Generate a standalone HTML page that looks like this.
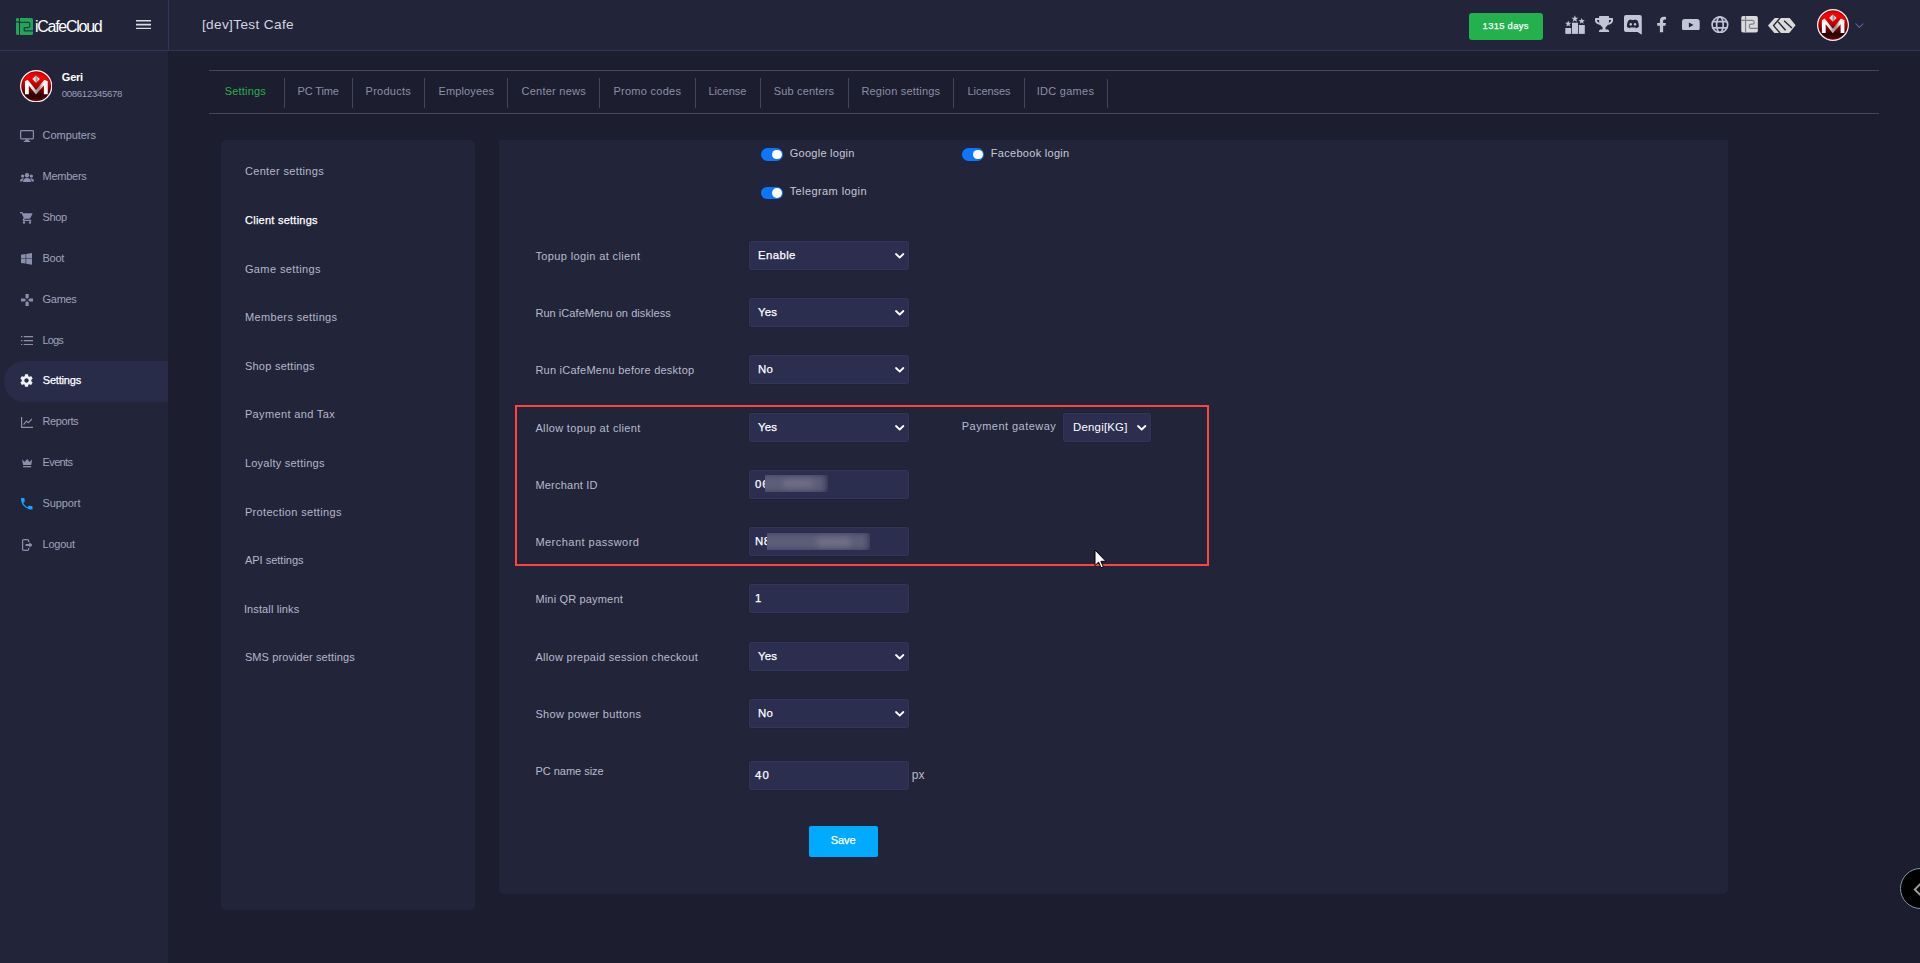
<!DOCTYPE html>
<html lang="en">
<head>
<meta charset="utf-8">
<title>iCafeCloud - Client settings</title>
<style>
*{box-sizing:border-box;margin:0;padding:0}
html,body{width:1920px;height:963px;overflow:hidden}
body{position:relative;background:#1c1d2e;font-family:"Liberation Sans",sans-serif;font-size:11px;color:#b8bacd}
.tx{position:absolute;white-space:nowrap;display:block;text-decoration:none;font-family:inherit;background:none;border:0;padding:0;margin:0}
.abs{position:absolute}
ul{list-style:none}
.topbar{position:absolute;left:0;top:0;width:1920px;height:51px;background:#222539;border-bottom:1px solid #30335a}
.brand{position:absolute;left:0;top:0;width:169px;height:50px;border-right:1px solid #30335a}
.sidebar{position:absolute;left:0;top:51px;width:168px;height:912px;background:#222539}
.nav-active{position:absolute;left:4px;top:360.5px;width:164px;height:41.5px;background:#282c48;border-radius:21px 0 0 21px}
.tabs{position:absolute;left:209px;top:70px;width:1670px;height:44px;border-top:1px solid #444759;border-bottom:1px solid #444759}
.tabs i{position:absolute;top:7px;width:1px;height:30px;background:#444759}
.tabs i.last{width:3px;background:none;border-right:1px solid #444759;border-top:1px solid transparent;border-radius:0 3px 0 0}
.panel{position:absolute;background:#222539}
.left-panel{left:221px;top:140px;width:254px;height:770px;border-radius:5px}
.right-panel{left:499px;top:140px;width:1229px;height:754px;border-radius:0 0 5px 5px}
.ctl{position:absolute;left:748px;width:162px;height:31px;background:#2c2e50;border:1px solid #202136;border-radius:3px;box-shadow:inset 0 0 0 1px #323558}
.ctl svg{position:absolute;right:4.3px;top:11.7px}
.sw{position:absolute;width:22px;height:12.6px;border-radius:7px;background:#0d76ff}
.sw b{position:absolute;right:1.2px;top:1.4px;width:9.8px;height:9.8px;border-radius:50%;background:#fff}
.hl{position:absolute;left:515px;top:405px;width:694px;height:161px;border:2px solid #ff4343}
.blur{position:absolute;overflow:hidden;background:#2c2e50}
.blur u{position:absolute;display:block;filter:blur(3px);background:#5c5d77;border-radius:3px}
.btn-save{position:absolute;left:809px;top:826px;width:69px;height:31px;border-radius:2px;background:#00aaff}
.badge{position:absolute;left:1469px;top:13px;width:74px;height:27px;border-radius:3px;background:#22b14c}

</style>
</head>
<body>
<header class="topbar">
<div class="brand">
<svg class="abs" style="left:16px;top:18px" width="17" height="17" viewBox="0 0 17 17"><rect x="0" y="0" width="3" height="3.6" rx="1.2" fill="#21a558"/><path d="M0 4.6h3v12.4h-1.6a1.4 1.4 0 0 1-1.4-1.4z" fill="#21a558"/><path d="M4 0h11.4a1.6 1.6 0 0 1 1.6 1.6v13.8a1.6 1.6 0 0 1-1.6 1.6H4z" fill="#21a558"/><path d="M4 4.300h8.200a1.600 1.600 0 0 1 1.600 1.600v2.200a1.600 1.600 0 0 1-1.600 1.600H8.200v3.200H17" fill="none" stroke="#1d2238" stroke-width="1"/></svg>
<span id="t1" class="tx" style="left:35.00px;top:17.00px;height:20px;line-height:20px;font-size:16px;font-weight:400;color:#fff;letter-spacing:-1.273px;">iCafeCloud</span>
<svg class="abs" style="left:136px;top:19.600px" width="15" height="9.400" viewBox="0 0 15 9.400"><path d="M0 .8h15M0 4.650h15M0 8.500h15" stroke="#d9dbe8" stroke-width="1.600"/></svg>
</div>
<h1 id="t2" class="tx" style="left:201.90px;top:15.00px;height:20px;line-height:20px;font-size:13.6px;font-weight:400;color:#d3d5e3;letter-spacing:0.374px;">[dev]Test Cafe</h1>
<div class="badge"></div><span id="t3" class="tx" style="left:1482.62px;top:18.00px;height:16px;line-height:16px;font-size:9.4px;font-weight:400;color:#fff;letter-spacing:0.309px;-webkit-text-stroke:0.25px #fff;">1315 days</span>
<svg class="abs" style="left:1565px;top:15px" width="20.4" height="19" viewBox="0 0 20.4 19"><g fill="#c3c5d6"><rect x=".3" y="13" width="5.9" height="5.9"/><rect x="7" y="7.7" width="6" height="11.2"/><rect x="13.8" y="10" width="6" height="8.9"/><polygon points="9.90,0.30 10.79,2.68 13.32,2.79 11.34,4.37 12.02,6.81 9.90,5.41 7.78,6.81 8.46,4.37 6.48,2.79 9.01,2.68"/><polygon points="3.20,5.50 4.01,7.68 6.34,7.78 4.52,9.23 5.14,11.47 3.20,10.19 1.26,11.47 1.88,9.23 0.06,7.78 2.39,7.68"/><polygon points="16.70,2.90 17.51,5.08 19.84,5.18 18.02,6.63 18.64,8.87 16.70,7.59 14.76,8.87 15.38,6.63 13.56,5.18 15.89,5.08"/></g></svg>
<svg class="abs" style="left:1594.9px;top:15.9px" width="18.1" height="16.1" viewBox="0 0 576 512"><path fill="#c3c5d6" d="M552 64H448V24c0-13.300-10.700-24-24-24H152c-13.300 0-24 10.700-24 24v40H24C10.700 64 0 74.700 0 88v56c0 35.700 22.500 72.400 61.900 100.700 31.500 22.700 69.800 37.100 110 41.700C203.300 338.500 240 360 240 360v72h-48c-35.300 0-64 20.700-64 56v12c0 6.600 5.400 12 12 12h296c6.600 0 12-5.400 12-12v-12c0-35.300-28.700-56-64-56h-48v-72s36.700-21.500 68.100-73.600c40.300-4.600 78.600-19 110-41.700 39.300-28.300 61.900-65 61.900-100.700V88c0-13.300-10.700-24-24-24zM99.300 192.800C74.900 175.200 64 155.600 64 144v-16h64.200c1 32.600 5.800 61.200 12.800 86.200-15.100-5.200-29.200-12.400-41.700-21.400zM512 144c0 16.100-17.700 36.100-35.300 48.800-12.500 9-26.700 16.200-41.800 21.400 7-25 11.800-53.600 12.800-86.200H512v16z"/></svg>
<svg class="abs" style="left:1624.2px;top:14.9px" width="17.8" height="19.7" viewBox="0 0 17.8 19.7"><path d="M2 0h13.800a2 2 0 0 1 2 2v17.700l-4.200-2.800H2a2 2 0 0 1-2-2V2a2 2 0 0 1 2-2z" fill="#c3c5d6"/><g transform="translate(8.9 9) scale(1.18) translate(-8.9 -8.7)"><path d="M5.200 5.600c1-.5 2-.7 2.200-.7l.3.500h2.400l.3-.5c.2 0 1.200.2 2.200.7 1 1.600 1.500 3.600 1.300 5.600-.8.600-1.700 1-2.500 1.100l-.6-.9c-1 .4-2.800.4-3.800 0l-.6.900c-.8-.1-1.700-.5-2.500-1.100-.2-2 .3-4 1.300-5.600z" fill="#222539"/><ellipse cx="7.100" cy="9" rx="1" ry="1.100" fill="#c3c5d6"/><ellipse cx="10.700" cy="9" rx="1" ry="1.100" fill="#c3c5d6"/></g></svg>
<svg class="abs" style="left:1657.3px;top:15.9px" width="9.9" height="17.1" viewBox="0 0 10.3 16.3"><path d="M3 16.300V9.500H.2V6.600H3V4.200C3 1.500 4.600 0 7.100 0c1.100 0 2.300.2 2.300.2v2.600H8.100c-1.300 0-1.700.8-1.700 1.600v2.200h2.900l-.5 2.900H6.400v6.800z" fill="#c3c5d6"/></svg>
<svg class="abs" style="left:1682.3px;top:18.6px" width="17.7" height="11.9" viewBox="0 0 17.7 11.9"><rect x="0" y="0" width="17.700" height="11.900" rx="2.800" fill="#c3c5d6"/><path d="M6.900 3.400v5.100l4.700-2.550z" fill="#222539"/></svg>
<svg class="abs" style="left:1711.2px;top:15.8px" width="17.8" height="17.5" viewBox="0 0 17.8 17.5"><g fill="none" stroke="#c3c5d6" stroke-width="1.700"><circle cx="8.900" cy="8.750" r="7.800"/><ellipse cx="8.900" cy="8.750" rx="3.300" ry="7.800"/><path d="M1.800 5.700h14.200M1.800 11.900h14.200"/></g></svg>
<svg class="abs" style="left:1740.7px;top:16.4px" width="17.1" height="16.6" viewBox="0 0 17 17"><path d="M1.800 0h13.400a1.800 1.800 0 0 1 1.800 1.800v13.400a1.800 1.800 0 0 1-1.800 1.800H1.800a1.800 1.800 0 0 1-1.800-1.800V1.800a1.800 1.800 0 0 1 1.800-1.800z" fill="#dadada"/><path d="M4.400 0v17" fill="none" stroke="#7d7f90" stroke-width="1.200"/><path d="M0 4.500h11.500a1.700 1.700 0 0 1 1.700 1.700v.4a1.700 1.700 0 0 1-1.700 1.700H10a1.700 1.700 0 0 0-1.700 1.700v1a1.700 1.700 0 0 0 1.700 1.700h7" fill="none" stroke="#7d7f90" stroke-width="1.200"/></svg>
<svg class="abs" style="left:1768.3px;top:17.8px" width="27.6" height="15.4" viewBox="0 0 27.6 15.4"><path d="M0 7.500L6.700 0h15l5.900 7.300-6.700 8.100H6.700z" fill="#dadada"/><g fill="none" stroke="#222539" stroke-width="1.400"><path d="M12.200-.2L5.600 7.600l6.900 8"/><path d="M10 3.700l7.600 8.600"/><path d="M16.100 2.700l7.800 7.200"/></g></svg>
<svg class="abs" style="left:1817px;top:9px" width="32" height="32" viewBox="0 0 32 32"><defs><linearGradient id="ga" x1="0" y1="0" x2="0" y2="1"><stop offset="0" stop-color="#d80000"/><stop offset=".22" stop-color="#fa0202"/><stop offset=".45" stop-color="#c40000"/><stop offset=".68" stop-color="#5e0000"/><stop offset=".78" stop-color="#2c0000"/><stop offset=".9" stop-color="#3c0000"/><stop offset="1" stop-color="#900808"/></linearGradient><linearGradient id="gam" x1="0" y1="0" x2="1" y2="0"><stop offset="0" stop-color="#fff"/><stop offset=".3" stop-color="#f2f2f2"/><stop offset=".5" stop-color="#a9a9a9"/><stop offset=".62" stop-color="#8e8e8e"/><stop offset=".8" stop-color="#f0f0f0"/><stop offset="1" stop-color="#fff"/></linearGradient></defs><circle cx="16" cy="16" r="15.300" fill="url(#ga)" stroke="#f1ecee" stroke-width="1.400"/><circle cx="16" cy="16" r="14.300" fill="none" stroke="#7a0000" stroke-width=".7" opacity=".7"/><path d="M15.900 5.200l3.700 3.700-3.700 3.900-3.700-3.900z" fill="url(#gam)"/><path d="M4.900 23.900V11.200l2.700-1.600 8.200 10.200 8.200-10.200 3.400 1.600v12.700h-3.800v-8.600l-7.800 8.900-7.100-8.900v8.600z" fill="url(#gam)"/></svg>
<svg class="abs" style="left:1854.9px;top:22.7px" width="8.8" height="5.4" viewBox="0 0 8.8 5.4"><path d="M.5.500L4.400 4.400 8.300.5" fill="none" stroke="#5a6ca6" stroke-width="1.050"/></svg>
</header>
<aside>
<div class="sidebar"><div class="nav-active" style="top:309.5px"></div></div>
<div class="profile">
<svg class="abs" style="left:19.8px;top:69.8px" width="32.4" height="32.4" viewBox="0 0 32 32"><defs><linearGradient id="gb" x1="0" y1="0" x2="0" y2="1"><stop offset="0" stop-color="#d80000"/><stop offset=".22" stop-color="#fa0202"/><stop offset=".45" stop-color="#c40000"/><stop offset=".68" stop-color="#5e0000"/><stop offset=".78" stop-color="#2c0000"/><stop offset=".9" stop-color="#3c0000"/><stop offset="1" stop-color="#900808"/></linearGradient><linearGradient id="gbm" x1="0" y1="0" x2="1" y2="0"><stop offset="0" stop-color="#fff"/><stop offset=".3" stop-color="#f2f2f2"/><stop offset=".5" stop-color="#a9a9a9"/><stop offset=".62" stop-color="#8e8e8e"/><stop offset=".8" stop-color="#f0f0f0"/><stop offset="1" stop-color="#fff"/></linearGradient></defs><circle cx="16" cy="16" r="15.300" fill="url(#gb)" stroke="#f1ecee" stroke-width="1.400"/><circle cx="16" cy="16" r="14.300" fill="none" stroke="#7a0000" stroke-width=".7" opacity=".7"/><path d="M15.900 5.200l3.700 3.700-3.700 3.900-3.700-3.900z" fill="url(#gbm)"/><path d="M4.900 23.900V11.200l2.700-1.600 8.200 10.200 8.200-10.200 3.400 1.600v12.700h-3.800v-8.600l-7.800 8.900-7.100-8.900v8.600z" fill="url(#gbm)"/></svg>
<span id="t4" class="tx" style="left:61.80px;top:68.60px;height:16px;line-height:16px;font-size:11px;font-weight:700;color:#fff;letter-spacing:-0.218px;">Geri</span><span id="t5" class="tx" style="left:61.80px;top:85.90px;height:16px;line-height:16px;font-size:9.6px;font-weight:400;color:#9a9dbb;letter-spacing:-0.317px;">008612345678</span>
</div>
<nav>
<a id="t6" class="tx" style="left:42.60px;top:127.00px;height:16px;line-height:16px;font-size:11px;font-weight:400;color:#9fa2bd;letter-spacing:-0.062px;">Computers</a>
<a id="t7" class="tx" style="left:42.60px;top:167.90px;height:16px;line-height:16px;font-size:11px;font-weight:400;color:#9fa2bd;letter-spacing:-0.274px;">Members</a>
<a id="t8" class="tx" style="left:42.60px;top:208.80px;height:16px;line-height:16px;font-size:11px;font-weight:400;color:#9fa2bd;letter-spacing:-0.391px;">Shop</a>
<a id="t9" class="tx" style="left:42.60px;top:249.70px;height:16px;line-height:16px;font-size:11px;font-weight:400;color:#9fa2bd;letter-spacing:-0.324px;">Boot</a>
<a id="t10" class="tx" style="left:42.60px;top:290.60px;height:16px;line-height:16px;font-size:11px;font-weight:400;color:#9fa2bd;letter-spacing:-0.314px;">Games</a>
<a id="t11" class="tx" style="left:42.60px;top:331.50px;height:16px;line-height:16px;font-size:11px;font-weight:400;color:#9fa2bd;letter-spacing:-0.918px;">Logs</a>
<a id="t12" class="tx" style="left:42.73px;top:372.40px;height:16px;line-height:16px;font-size:11px;font-weight:400;color:#fff;letter-spacing:-0.171px;-webkit-text-stroke:0.25px #fff;">Settings</a>
<a id="t13" class="tx" style="left:42.60px;top:413.30px;height:16px;line-height:16px;font-size:11px;font-weight:400;color:#9fa2bd;letter-spacing:-0.419px;">Reports</a>
<a id="t14" class="tx" style="left:42.60px;top:454.20px;height:16px;line-height:16px;font-size:11px;font-weight:400;color:#9fa2bd;letter-spacing:-0.646px;">Events</a>
<a id="t15" class="tx" style="left:42.60px;top:495.10px;height:16px;line-height:16px;font-size:11px;font-weight:400;color:#9fa2bd;letter-spacing:-0.112px;">Support</a>
<a id="t16" class="tx" style="left:42.60px;top:536.00px;height:16px;line-height:16px;font-size:11px;font-weight:400;color:#9fa2bd;letter-spacing:-0.238px;">Logout</a>
<svg class="abs" style="left:20.0px;top:130.0px" width="14" height="12" viewBox="0 0 14 12"><rect x=".6" y=".6" width="12.8" height="8.3" rx=".8" fill="none" stroke="#8b8fae" stroke-width="1.2"/><path d="M5.6 9.200h2.800l.6 1.700h1.200v1.100H3.800v-1.100H5z" fill="#8b8fae"/></svg>
<svg class="abs" style="left:20.0px;top:172.8px" width="14" height="9" viewBox="0 0 14 9"><g fill="#8b8fae"><circle cx="7" cy="2.3" r="2.2"/><path d="M3 9c0-2.6 1.8-3.9 4-3.900s4 1.3 4 3.900z"/><circle cx="2.6" cy="3.1" r="1.6"/><path d="M0 8.600c0-2 1.1-3.2 2.7-3.2.5 0 .9.1 1.3.3-.9.7-1.6 1.7-1.7 2.900z"/><circle cx="11.4" cy="3.1" r="1.6"/><path d="M14 8.600c0-2-1.1-3.2-2.7-3.2-.5 0-.9.1-1.3.3.9.7 1.6 1.7 1.7 2.900z"/></g></svg>
<svg class="abs" style="left:20.0px;top:212.4px" width="12.5" height="11.7" viewBox="0 0 12.5 11.7"><g fill="#8b8fae"><path d="M0 0h2.300l.6 1.300h9.300c.3 0 .4.3.3.500L10.4 6c-.2.4-.6.7-1.1.700H4.700l-.6 1.100h7.200v1.200H3.900c-.9 0-1.5-1-1-1.800l.8-1.500L1.5 1.200H0z"/><circle cx="4" cy="10.5" r="1.2"/><circle cx="10" cy="10.5" r="1.2"/></g></svg>
<svg class="abs" style="left:20.9px;top:253.0px" width="11.2" height="11.7" viewBox="0 0 11.2 11.7"><g fill="#8b8fae"><path d="M0 1.700l4.6-.7v4.500H0zM5.2.9L11.2 0v5.500h-6zM0 6.100h4.600v4.500L0 9.900zM5.2 6.100h6v5.600l-6-.9z"/></g></svg>
<svg class="abs" style="left:20.9px;top:293.8px" width="12.2" height="12" viewBox="0 0 12.2 12"><g fill="#8b8fae"><path d="M4.5 0h3.200v3.400L6.1 5 4.5 3.400zM4.5 12h3.200V8.600L6.1 7 4.5 8.600zM0 4.400h3.500L5.1 6 3.5 7.600H0zM12.2 4.400H8.700L7.1 6l1.6 1.600h3.500z"/></g></svg>
<svg class="abs" style="left:20.9px;top:335.7px" width="12.1" height="9.3" viewBox="0 0 12.1 9.3"><g fill="#8b8fae"><rect x="0" y="0" width="1.4" height="1.3"/><rect x="2.8" y="0" width="9.3" height="1.3"/><rect x="0" y="4" width="1.4" height="1.3"/><rect x="2.8" y="4" width="9.3" height="1.3"/><rect x="0" y="8" width="1.4" height="1.3"/><rect x="2.8" y="8" width="9.3" height="1.3"/></g></svg>
<svg class="abs" style="left:19.47px;top:373.34px" width="15.06" height="15.06" viewBox="0 0 24 24"><path fill="#f1f2f8" d="M19.430 12.980c.040-.320.070-.640.070-.980s-.030-.660-.070-.980l2.110-1.650c.190-.150.240-.420.120-.640l-2-3.460c-.120-.220-.390-.300-.610-.220l-2.490 1c-.520-.400-1.080-.730-1.690-.980l-.380-2.650C14.460 2.180 14.250 2 14 2h-4c-.250 0-.460.180-.490.420l-.380 2.650c-.610.250-1.170.590-1.690.980l-2.490-1c-.230-.090-.490 0-.610.220l-2 3.460c-.130.220-.070.490.120.640l2.110 1.650c-.040.320-.070.650-.070.980s.030.660.070.980l-2.110 1.650c-.190.150-.240.420-.120.640l2 3.460c.120.220.390.3.610.220l2.490-1c.520.4 1.080.730 1.690.980l.380 2.650c.030.240.240.420.490.420h4c.250 0 .460-.180.490-.420l.380-2.650c.610-.250 1.170-.590 1.690-.980l2.490 1c.230.090.490 0 .610-.220l2-3.460c.120-.220.070-.490-.120-.640l-2.110-1.650zM12 15.500c-1.930 0-3.5-1.570-3.5-3.500s1.570-3.5 3.5-3.5 3.5 1.570 3.5 3.5-1.570 3.5-3.5 3.500z"/></svg>
<svg class="abs" style="left:20.7px;top:416.7px" width="12.3" height="11" viewBox="0 0 12.3 11"><path d="M.6 0v10.400h11.7" fill="none" stroke="#8b8fae" stroke-width="1.2"/><path d="M2.6 7.600l2.7-3.5 2 1.6 3.6-3.7" fill="none" stroke="#8b8fae" stroke-width="1.1"/></svg>
<svg class="abs" style="left:22.0px;top:459.1px" width="10.3" height="8.5" viewBox="0 0 10.3 8.5"><g fill="#8b8fae"><path d="M0 .3l2.6 2.800L5.150 0l2.550 3.100L10.3.3 9.2 6H1.100z"/><rect x="1.1" y="7" width="8.1" height="1.3"/></g></svg>
<svg class="abs" style="left:19.07px;top:495.97px" width="15.47" height="15.47" viewBox="0 0 24 24"><path fill="#10a5ff" d="M6.620 10.790c1.440 2.830 3.760 5.140 6.590 6.590l2.2-2.200c.270-.270.670-.360 1.020-.240 1.120.370 2.330.570 3.570.570.550 0 1 .450 1 1V20c0 .550-.450 1-1 1-9.390 0-17-7.610-17-17 0-.550.450-1 1-1h3.500c.550 0 1 .450 1 1 0 1.250.2 2.450.570 3.570.110.350.030.740-.250 1.020l-2.2 2.200z"/></svg>
<svg class="abs" style="left:21.5px;top:538.5px" width="10.9" height="12" viewBox="0 0 10.9 12"><path d="M6.6 3V1.700A1.1 1.1 0 0 0 5.5.6H1.700A1.1 1.1 0 0 0 .6 1.700v8.600a1.1 1.1 0 0 0 1.1 1.100h3.800a1.1 1.1 0 0 0 1.1-1.100V9" fill="none" stroke="#8b8fae" stroke-width="1.2"/><path d="M3.6 5.100h3.700V3.300l3.5 2.7-3.5 2.700V6.900H3.600z" fill="#8b8fae"/></svg>
</nav>
</aside>
<main>
<nav>
<div class="tabs"><i style="left:75px"></i><i style="left:143px"></i><i style="left:215px"></i><i style="left:298px"></i><i style="left:390px"></i><i style="left:486px"></i><i style="left:551px"></i><i style="left:639px"></i><i style="left:744px"></i><i style="left:815px"></i><i class="last" style="left:896px"></i></div>
<a id="t17" class="tx" style="left:224.75px;top:83.00px;height:16px;line-height:16px;font-size:11px;font-weight:400;color:#27b04a;letter-spacing:0.179px;">Settings</a>
<a id="t18" class="tx" style="left:297.50px;top:83.00px;height:16px;line-height:16px;font-size:11px;font-weight:400;color:#8c8ea6;letter-spacing:-0.126px;">PC Time</a>
<a id="t19" class="tx" style="left:365.60px;top:83.00px;height:16px;line-height:16px;font-size:11px;font-weight:400;color:#8c8ea6;letter-spacing:0.242px;">Products</a>
<a id="t20" class="tx" style="left:438.50px;top:83.00px;height:16px;line-height:16px;font-size:11px;font-weight:400;color:#8c8ea6;letter-spacing:0.136px;">Employees</a>
<a id="t21" class="tx" style="left:521.50px;top:83.00px;height:16px;line-height:16px;font-size:11px;font-weight:400;color:#8c8ea6;letter-spacing:0.250px;">Center news</a>
<a id="t22" class="tx" style="left:613.40px;top:83.00px;height:16px;line-height:16px;font-size:11px;font-weight:400;color:#8c8ea6;letter-spacing:0.279px;">Promo codes</a>
<a id="t23" class="tx" style="left:708.50px;top:83.00px;height:16px;line-height:16px;font-size:11px;font-weight:400;color:#8c8ea6;letter-spacing:-0.008px;">License</a>
<a id="t24" class="tx" style="left:773.75px;top:83.00px;height:16px;line-height:16px;font-size:11px;font-weight:400;color:#8c8ea6;letter-spacing:0.165px;">Sub centers</a>
<a id="t25" class="tx" style="left:861.40px;top:83.00px;height:16px;line-height:16px;font-size:11px;font-weight:400;color:#8c8ea6;letter-spacing:0.205px;">Region settings</a>
<a id="t26" class="tx" style="left:967.50px;top:83.00px;height:16px;line-height:16px;font-size:11px;font-weight:400;color:#8c8ea6;letter-spacing:-0.059px;">Licenses</a>
<a id="t27" class="tx" style="left:1036.70px;top:83.00px;height:16px;line-height:16px;font-size:11px;font-weight:400;color:#8c8ea6;letter-spacing:0.273px;">IDC games</a>
</nav>
<section>
<div class="panel left-panel"></div>
<a id="t28" class="tx" style="left:244.90px;top:162.80px;height:16px;line-height:16px;font-size:11px;font-weight:400;color:#b4b6cb;letter-spacing:0.351px;">Center settings</a>
<a id="t29" class="tx" style="left:245.03px;top:211.80px;height:16px;line-height:16px;font-size:11px;font-weight:400;color:#fff;letter-spacing:0.247px;-webkit-text-stroke:0.25px #fff;">Client settings</a>
<a id="t30" class="tx" style="left:244.90px;top:260.80px;height:16px;line-height:16px;font-size:11px;font-weight:400;color:#b4b6cb;letter-spacing:0.398px;">Game settings</a>
<a id="t31" class="tx" style="left:244.90px;top:308.80px;height:16px;line-height:16px;font-size:11px;font-weight:400;color:#b4b6cb;letter-spacing:0.359px;">Members settings</a>
<a id="t32" class="tx" style="left:244.90px;top:357.80px;height:16px;line-height:16px;font-size:11px;font-weight:400;color:#b4b6cb;letter-spacing:0.254px;">Shop settings</a>
<a id="t33" class="tx" style="left:244.90px;top:405.80px;height:16px;line-height:16px;font-size:11px;font-weight:400;color:#b4b6cb;letter-spacing:0.358px;">Payment and Tax</a>
<a id="t34" class="tx" style="left:244.90px;top:454.80px;height:16px;line-height:16px;font-size:11px;font-weight:400;color:#b4b6cb;letter-spacing:0.245px;">Loyalty settings</a>
<a id="t35" class="tx" style="left:244.90px;top:503.80px;height:16px;line-height:16px;font-size:11px;font-weight:400;color:#b4b6cb;letter-spacing:0.334px;">Protection settings</a>
<a id="t36" class="tx" style="left:244.90px;top:551.80px;height:16px;line-height:16px;font-size:11px;font-weight:400;color:#b4b6cb;letter-spacing:0.000px;">API settings</a>
<a id="t37" class="tx" style="left:243.90px;top:600.80px;height:16px;line-height:16px;font-size:11px;font-weight:400;color:#b4b6cb;letter-spacing:0.125px;">Install links</a>
<a id="t38" class="tx" style="left:244.90px;top:648.80px;height:16px;line-height:16px;font-size:11px;font-weight:400;color:#b4b6cb;letter-spacing:0.110px;">SMS provider settings</a>
</section>
<section>
<div class="panel right-panel"></div>
<form>
<span class="sw" style="left:761px;top:147.9px;height:13.1px"><b style="top:1.65px"></b></span><span id="t39" class="tx" style="left:789.70px;top:144.80px;height:16px;line-height:16px;font-size:11px;font-weight:400;color:#c6c8d8;letter-spacing:0.268px;">Google login</span>
<span class="sw" style="left:962px;top:147.9px;height:13.1px"><b style="top:1.65px"></b></span><span id="t40" class="tx" style="left:990.80px;top:144.80px;height:16px;line-height:16px;font-size:11px;font-weight:400;color:#c6c8d8;letter-spacing:0.293px;">Facebook login</span>
<span class="sw" style="left:761px;top:186.6px;height:12.6px"><b style="top:1.40px"></b></span><span id="t41" class="tx" style="left:789.70px;top:182.90px;height:16px;line-height:16px;font-size:11px;font-weight:400;color:#c6c8d8;letter-spacing:0.406px;">Telegram login</span>
<label id="t42" class="tx" style="left:535.40px;top:247.85px;height:16px;line-height:16px;font-size:11px;font-weight:400;color:#b8bacd;letter-spacing:0.371px;">Topup login at client</label>
<label id="t43" class="tx" style="left:535.40px;top:304.80px;height:16px;line-height:16px;font-size:11px;font-weight:400;color:#b8bacd;letter-spacing:0.058px;">Run iCafeMenu on diskless</label>
<label id="t44" class="tx" style="left:535.40px;top:361.90px;height:16px;line-height:16px;font-size:11px;font-weight:400;color:#b8bacd;letter-spacing:0.239px;">Run iCafeMenu before desktop</label>
<label id="t45" class="tx" style="left:535.40px;top:419.70px;height:16px;line-height:16px;font-size:11px;font-weight:400;color:#b8bacd;letter-spacing:0.356px;">Allow topup at client</label>
<label id="t46" class="tx" style="left:535.40px;top:476.90px;height:16px;line-height:16px;font-size:11px;font-weight:400;color:#b8bacd;letter-spacing:0.223px;">Merchant ID</label>
<label id="t47" class="tx" style="left:535.40px;top:533.90px;height:16px;line-height:16px;font-size:11px;font-weight:400;color:#b8bacd;letter-spacing:0.471px;">Merchant password</label>
<label id="t48" class="tx" style="left:535.40px;top:590.70px;height:16px;line-height:16px;font-size:11px;font-weight:400;color:#b8bacd;letter-spacing:0.170px;">Mini QR payment</label>
<label id="t49" class="tx" style="left:535.40px;top:648.50px;height:16px;line-height:16px;font-size:11px;font-weight:400;color:#b8bacd;letter-spacing:0.306px;">Allow prepaid session checkout</label>
<label id="t50" class="tx" style="left:535.40px;top:705.90px;height:16px;line-height:16px;font-size:11px;font-weight:400;color:#b8bacd;letter-spacing:0.343px;">Show power buttons</label>
<label id="t51" class="tx" style="left:535.40px;top:763.00px;height:16px;line-height:16px;font-size:11px;font-weight:400;color:#b8bacd;letter-spacing:-0.014px;">PC name size</label>
<div class="ctl" style="left:748px;top:240px;width:162px"><svg width="9.4" height="5.9" viewBox="-1 -1 9.4 5.9"><path d="M0 0 L3.7 3.5 L7.4 0" fill="none" stroke="#fff" stroke-width="1.8" stroke-linecap="round" stroke-linejoin="round"/></svg></div><span id="t52" class="tx" style="left:758.12px;top:245.70px;height:18px;line-height:18px;font-size:11.4px;font-weight:400;color:#fff;letter-spacing:0.363px;-webkit-text-stroke:0.25px #fff;">Enable</span>
<div class="ctl" style="left:748px;top:297px;width:162px"><svg width="9.4" height="5.9" viewBox="-1 -1 9.4 5.9"><path d="M0 0 L3.7 3.5 L7.4 0" fill="none" stroke="#fff" stroke-width="1.8" stroke-linecap="round" stroke-linejoin="round"/></svg></div><span id="t53" class="tx" style="left:758.12px;top:302.70px;height:18px;line-height:18px;font-size:11.4px;font-weight:400;color:#fff;letter-spacing:0.182px;-webkit-text-stroke:0.25px #fff;">Yes</span>
<div class="ctl" style="left:748px;top:354px;width:162px"><svg width="9.4" height="5.9" viewBox="-1 -1 9.4 5.9"><path d="M0 0 L3.7 3.5 L7.4 0" fill="none" stroke="#fff" stroke-width="1.8" stroke-linecap="round" stroke-linejoin="round"/></svg></div><span id="t54" class="tx" style="left:758.12px;top:359.70px;height:18px;line-height:18px;font-size:11.4px;font-weight:400;color:#fff;letter-spacing:0.124px;-webkit-text-stroke:0.25px #fff;">No</span>
<div class="ctl" style="left:748px;top:412px;width:162px"><svg width="9.4" height="5.9" viewBox="-1 -1 9.4 5.9"><path d="M0 0 L3.7 3.5 L7.4 0" fill="none" stroke="#fff" stroke-width="1.8" stroke-linecap="round" stroke-linejoin="round"/></svg></div><span id="t55" class="tx" style="left:758.12px;top:417.70px;height:18px;line-height:18px;font-size:11.4px;font-weight:400;color:#fff;letter-spacing:0.182px;-webkit-text-stroke:0.25px #fff;">Yes</span>
<label id="t56" class="tx" style="left:961.80px;top:418.00px;height:16px;line-height:16px;font-size:11px;font-weight:400;color:#b8bacd;letter-spacing:0.469px;">Payment gateway</label><div class="ctl" style="left:1062px;top:412px;width:90px"><svg width="9.4" height="5.9" viewBox="-1 -1 9.4 5.9"><path d="M0 0 L3.7 3.5 L7.4 0" fill="none" stroke="#fff" stroke-width="1.8" stroke-linecap="round" stroke-linejoin="round"/></svg></div><span id="t57" class="tx" style="left:1073.00px;top:417.70px;height:18px;line-height:18px;font-size:11.4px;font-weight:400;color:#fff;letter-spacing:0.227px;">Dengi[KG]</span>
<div class="ctl" style="top:469px"></div><span id="t58" class="tx" style="left:755.02px;top:474.70px;height:18px;line-height:18px;font-size:11.4px;font-weight:400;color:#fff;letter-spacing:0.915px;-webkit-text-stroke:0.25px #fff;">06</span>
<div class="blur" style="left:765px;top:475px;width:63px;height:17px"><u style="left:-8px;top:-1px;width:69px;height:19px"></u><u style="left:18px;top:5px;width:30px;height:7px;background:#72738a"></u></div>
<div class="ctl" style="top:526px"></div><span id="t59" class="tx" style="left:755.02px;top:531.70px;height:18px;line-height:18px;font-size:11.4px;font-weight:400;color:#fff;letter-spacing:0.524px;-webkit-text-stroke:0.25px #fff;">N8</span>
<div class="blur" style="left:767px;top:533px;width:103px;height:17px"><u style="left:-8px;top:-1px;width:110px;height:19px"></u><u style="left:50px;top:5px;width:34px;height:8px;background:#72738a"></u></div>
<div class="ctl" style="top:583px"></div><span id="t60" class="tx" style="left:755.02px;top:588.70px;height:18px;line-height:18px;font-size:11.4px;font-weight:400;color:#fff;letter-spacing:-3.050px;-webkit-text-stroke:0.25px #fff;">1</span>
<div class="ctl" style="left:748px;top:641px;width:162px"><svg width="9.4" height="5.9" viewBox="-1 -1 9.4 5.9"><path d="M0 0 L3.7 3.5 L7.4 0" fill="none" stroke="#fff" stroke-width="1.8" stroke-linecap="round" stroke-linejoin="round"/></svg></div><span id="t61" class="tx" style="left:758.12px;top:646.70px;height:18px;line-height:18px;font-size:11.4px;font-weight:400;color:#fff;letter-spacing:0.182px;-webkit-text-stroke:0.25px #fff;">Yes</span>
<div class="ctl" style="left:748px;top:698px;width:162px"><svg width="9.4" height="5.9" viewBox="-1 -1 9.4 5.9"><path d="M0 0 L3.7 3.5 L7.4 0" fill="none" stroke="#fff" stroke-width="1.8" stroke-linecap="round" stroke-linejoin="round"/></svg></div><span id="t62" class="tx" style="left:758.12px;top:703.70px;height:18px;line-height:18px;font-size:11.4px;font-weight:400;color:#fff;letter-spacing:0.124px;-webkit-text-stroke:0.25px #fff;">No</span>
<div class="ctl" style="top:760px"></div><span id="t63" class="tx" style="left:755.02px;top:765.70px;height:18px;line-height:18px;font-size:11.4px;font-weight:400;color:#fff;letter-spacing:1.215px;-webkit-text-stroke:0.25px #fff;">40</span>
<span id="t64" class="tx" style="left:911.70px;top:767.10px;height:16px;line-height:16px;font-size:12px;font-weight:400;color:#b8bacd;letter-spacing:0.126px;">px</span><div class="hl"></div>
<div class="btn-save"></div><button id="t65" class="tx" style="left:830.83px;top:832.00px;height:16px;line-height:16px;font-size:11px;font-weight:400;color:#fff;letter-spacing:-0.135px;-webkit-text-stroke:0.25px #fff;">Save</button>
</form>
</section>
</main>
<div class="abs" style="left:1900px;top:868.300px;width:41px;height:41px;border-radius:50%;background:#000;border:1px solid #7d9aa8"></div>
<svg class="abs" style="left:1912.6px;top:881.5px" width="8" height="15" viewBox="0 0 8 15"><path d="M8.5 1L1.8 7.500l6.7 6.5" fill="none" stroke="#9a9a9a" stroke-width="2"/></svg>
<svg class="abs" style="left:1093.5px;top:548.5px" width="13" height="21" viewBox="0 0 13 21"><path d="M1 1v15.500l3.6-3.4 2.4 5.7 2.3-1-2.4-5.500h5z" fill="#fff" stroke="#000" stroke-width="1"/></svg>

</body>
</html>
